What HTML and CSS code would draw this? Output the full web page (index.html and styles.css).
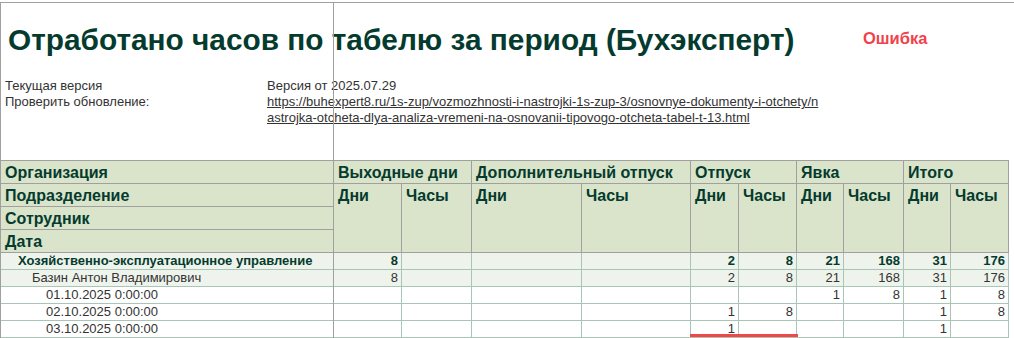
FILE: index.html
```html
<!DOCTYPE html>
<html lang="ru">
<head>
<meta charset="utf-8">
<title>Отработано часов по табелю за период</title>
<link rel="stylesheet" href="styles.css">
</head>
<body>
<div class="sheet">
  <div class="freeze-line"></div>
  <div class="title-row">
    <h1 class="title">Отработано часов по табелю за период (Бухэксперт)</h1>
    <span class="error">Ошибка</span>
  </div>
  <div class="info">
    <span class="label">Текущая версия</span>
    <span class="value">Версия от 2025.07.29</span>
    <span class="label">Проверить обновление:</span>
    <a class="value link" href="#">https://buhexpert8.ru/1s-zup/vozmozhnosti-i-nastrojki-1s-zup-3/osnovnye-dokumenty-i-otchety/n<br>astrojka-otcheta-dlya-analiza-vremeni-na-osnovanii-tipovogo-otcheta-tabel-t-13.html</a>
  </div>
  <table class="report">
    <colgroup>
      <col class="c-name">
      <col class="c-68"><col class="c-70">
      <col class="c-110"><col class="c-109">
      <col class="c-48"><col class="c-58">
      <col class="c-47"><col class="c-60">
      <col class="c-47"><col class="c-58">
    </colgroup>
    <thead>
      <tr>
        <th class="h">Организация</th>
        <th class="h" colspan="2">Выходные дни</th>
        <th class="h" colspan="2">Дополнительный отпуск</th>
        <th class="h" colspan="2">Отпуск</th>
        <th class="h" colspan="2">Явка</th>
        <th class="h" colspan="2">Итого</th>
      </tr>
      <tr>
        <th class="h">Подразделение</th>
        <th class="h" rowspan="3">Дни</th>
        <th class="h" rowspan="3">Часы</th>
        <th class="h" rowspan="3">Дни</th>
        <th class="h" rowspan="3">Часы</th>
        <th class="h" rowspan="3">Дни</th>
        <th class="h" rowspan="3">Часы</th>
        <th class="h" rowspan="3">Дни</th>
        <th class="h" rowspan="3">Часы</th>
        <th class="h" rowspan="3">Дни</th>
        <th class="h" rowspan="3">Часы</th>
      </tr>
      <tr><th class="h">Сотрудник</th></tr>
      <tr><th class="h">Дата</th></tr>
    </thead>
    <tbody>
      <tr class="group">
        <td class="name lvl1">Хозяйственно-эксплуатационное управление</td>
        <td class="num">8</td><td class="num"></td>
        <td class="num"></td><td class="num"></td>
        <td class="num">2</td><td class="num">8</td>
        <td class="num">21</td><td class="num">168</td>
        <td class="num">31</td><td class="num">176</td>
      </tr>
      <tr class="emp">
        <td class="name lvl2">Базин Антон Владимирович</td>
        <td class="num">8</td><td class="num"></td>
        <td class="num"></td><td class="num"></td>
        <td class="num">2</td><td class="num">8</td>
        <td class="num">21</td><td class="num">168</td>
        <td class="num">31</td><td class="num">176</td>
      </tr>
      <tr>
        <td class="name lvl3">01.10.2025 0:00:00</td>
        <td class="num"></td><td class="num"></td>
        <td class="num"></td><td class="num"></td>
        <td class="num"></td><td class="num"></td>
        <td class="num">1</td><td class="num">8</td>
        <td class="num">1</td><td class="num">8</td>
      </tr>
      <tr>
        <td class="name lvl3">02.10.2025 0:00:00</td>
        <td class="num"></td><td class="num"></td>
        <td class="num"></td><td class="num"></td>
        <td class="num">1</td><td class="num">8</td>
        <td class="num"></td><td class="num"></td>
        <td class="num">1</td><td class="num">8</td>
      </tr>
      <tr>
        <td class="name lvl3">03.10.2025 0:00:00</td>
        <td class="num"></td><td class="num"></td>
        <td class="num"></td><td class="num"></td>
        <td class="num mark">1</td><td class="num mark mark-end"></td>
        <td class="num"></td><td class="num"></td>
        <td class="num">1</td><td class="num"></td>
      </tr>
    </tbody>
  </table>
</div>
</body>
</html>
```
FILE: styles.css
```css
html, body {
  margin: 0;
  padding: 0;
  background: #ffffff;
  overflow: hidden;
}
body {
  font-family: "Liberation Sans", Arial, sans-serif;
  color: #333333;
}
.sheet {
  position: relative;
  margin-top: 2px;
  border-top: 1px solid #a0a0a0;
  border-left: 1px solid #a0a0a0;
  height: 400px;
}
.freeze-line {
  position: absolute;
  left: 332px;
  top: 0;
  bottom: 0;
  width: 1px;
  background: #a0a0a0;
  pointer-events: none;
  z-index: 2;
}
.title-row {
  display: grid;
  grid-template-columns: 855px auto;
  align-items: start;
  padding: 20px 0 0 7px;
}
.title {
  margin: 0;
  font-size: 29.8px;
  line-height: 34px;
  font-weight: bold;
  color: #053b2e;
  white-space: nowrap;
}
.error {
  margin-top: 6px;
  font-size: 16.5px;
  line-height: 18px;
  font-weight: bold;
  color: #f2414a;
}
.info {
  display: grid;
  grid-template-columns: 262px auto;
  padding: 21px 0 0 4px;
  font-size: 13px;
  line-height: 16px;
  color: #333333;
}
.link {
  color: #333333;
  text-decoration: underline;
}
.report {
  margin-top: 34px;
  border-collapse: separate;
  border-spacing: 0;
  table-layout: fixed;
  width: 1008px;
  border-top: 1px solid #a0a0a0;
}
.c-name { width: 333px; }
.c-68 { width: 68px; }
.c-70 { width: 70px; }
.c-110 { width: 110px; }
.c-109 { width: 109px; }
.c-48 { width: 48px; }
.c-58 { width: 58px; }
.c-47 { width: 47px; }
.c-60 { width: 60px; }
.report th,
.report td {
  padding: 0;
  box-sizing: border-box;
  overflow: hidden;
  white-space: nowrap;
}
.h {
  background: #d9e4cb;
  color: #053b2e;
  font-size: 16px;
  line-height: 18px;
  font-weight: bold;
  text-align: left;
  vertical-align: top;
  padding: 3px 2px 1px 4px !important;
  border-right: 1px solid #a0a0a0;
  border-bottom: 1px solid #a0a0a0;
  height: 23px;
}
.report td {
  font-size: 13px;
  line-height: 16px;
  height: 17px;
  border-right: 1px solid #a8c5b7;
  border-bottom: 1px solid #a8c5b7;
  vertical-align: top;
}
.num {
  text-align: right;
  padding-right: 3px !important;
}
.group td,
.emp td {
  background: #eef3ec;
}
.group td {
  font-weight: bold;
  color: #053b2e;
}
.lvl1 { padding-left: 17px !important; }
.lvl2 { padding-left: 31px !important; }
.lvl3 { padding-left: 45px !important; }
.mark {
  position: relative;
  overflow: visible !important;
}
.mark::after {
  content: "";
  position: absolute;
  left: -1px;
  right: -1px;
  bottom: 0;
  height: 3px;
  background: #f04848;
}
.mark-end::after {
  right: -2px;
}
```
